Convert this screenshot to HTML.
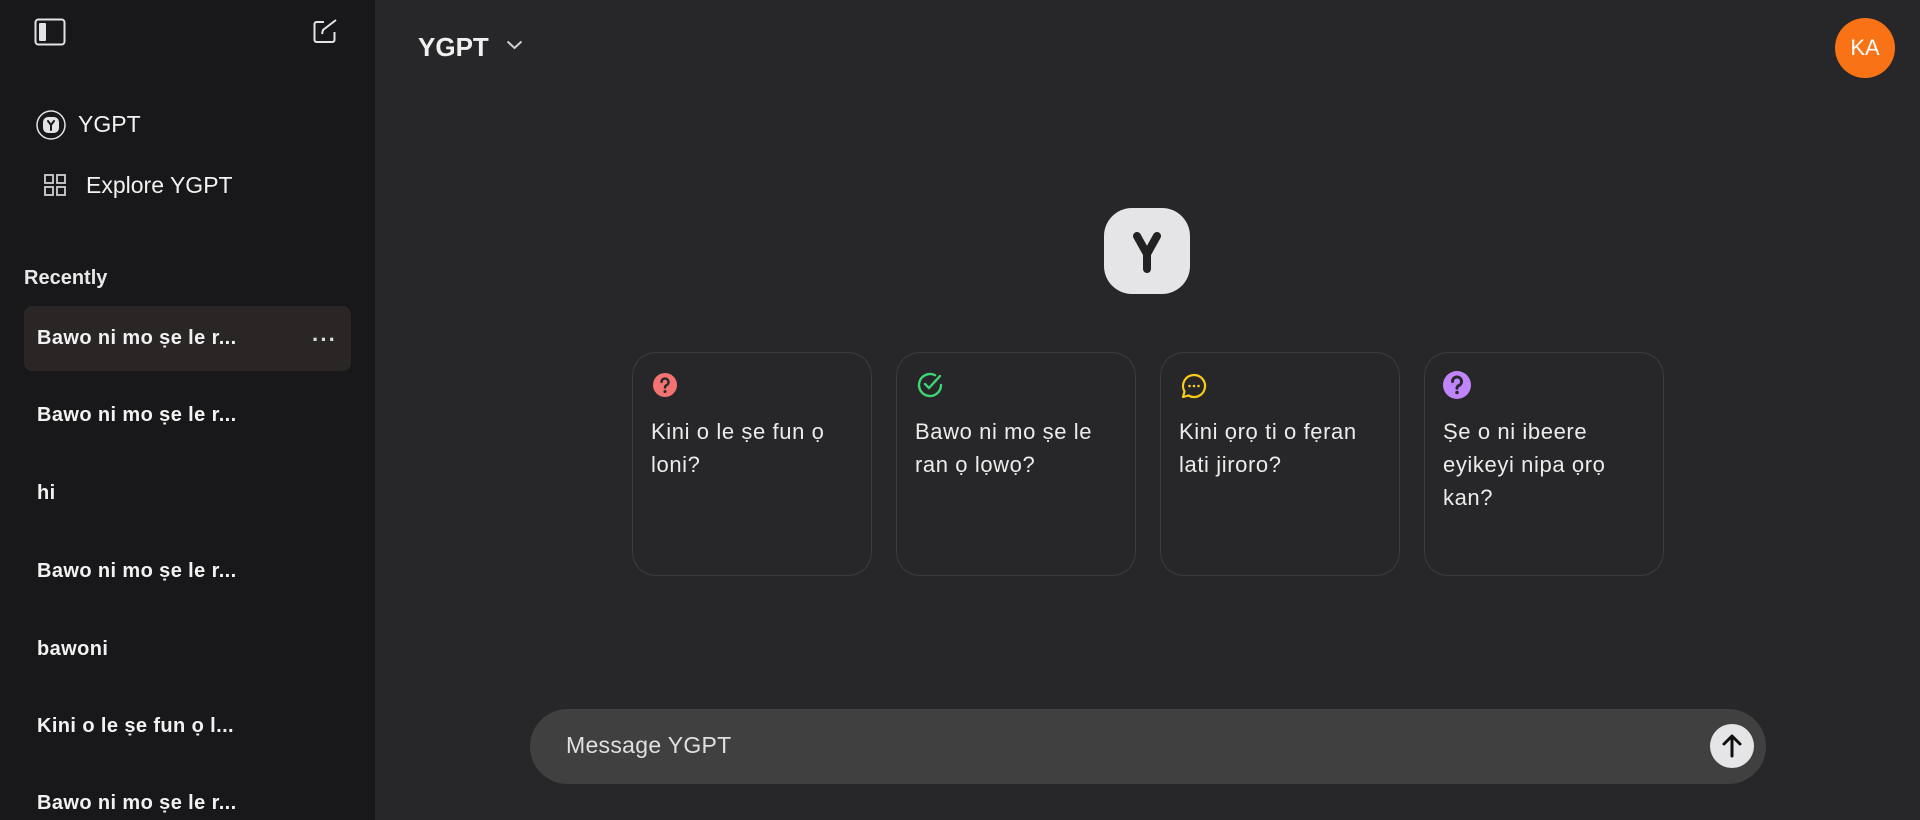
<!DOCTYPE html>
<html><head><meta charset="utf-8">
<style>
*{margin:0;padding:0;box-sizing:border-box}
body{width:1920px;height:820px;overflow:hidden;background:#272729;font-family:"Liberation Sans",Arial,sans-serif;color:#ececec;position:relative}
.sb{position:absolute;left:0;top:0;width:375px;height:820px;background:#18181a}
.abs{position:absolute}
.item{position:absolute;left:37px;font-weight:bold;font-size:20px;letter-spacing:0.4px;color:#f2f2f2;white-space:nowrap}
.card{position:absolute;top:352px;width:240px;height:224px;border:1px solid #3c3c3f;border-radius:24px}
.card svg{position:absolute;left:20px;top:20px}
.card p{position:absolute;left:18px;top:62px;white-space:nowrap;font-size:22px;letter-spacing:0.6px;line-height:33px;color:#ececec}
</style></head><body>
<div class="sb">
  <svg class="abs" style="left:34px;top:18px" width="32" height="28" viewBox="0 0 32 28"><rect x="1.5" y="1.5" width="29" height="25" rx="3" fill="none" stroke="#e3e3e6" stroke-width="2"/><rect x="5" y="5" width="7" height="18" rx="1" fill="#e3e3e6"/></svg>
  <svg class="abs" style="left:312px;top:19px" width="26" height="26" viewBox="0 0 26 26"><path d="M12 3H4.5A2 2 0 0 0 2.5 5v16a2 2 0 0 0 2 2h16a2 2 0 0 0 2-2v-8" fill="none" stroke="#e3e3e6" stroke-width="2"/><path d="M10 15l1-4L24 1" fill="none" stroke="#e3e3e6" stroke-width="2"/></svg>
  <svg class="abs" style="left:36px;top:110px" width="30" height="30" viewBox="0 0 30 30"><circle cx="15" cy="15" r="14" fill="none" stroke="#e3e3e6" stroke-width="1.5"/><rect x="7" y="7" width="16" height="16" rx="5" fill="#e3e3e6"/><path d="M12 11l3 4 3-4M15 15v5" stroke="#18181a" stroke-width="2" fill="none" stroke-linecap="round"/></svg>
  <div class="abs" style="left:78px;top:111px;font-size:23px;color:#f2f2f2">YGPT</div>
  <svg class="abs" style="left:44px;top:174px" width="22" height="22" viewBox="0 0 22 22" fill="none" stroke="#d0d0d3" stroke-width="1.8"><rect x="1" y="1" width="8" height="8"/><rect x="13" y="1" width="8" height="8"/><rect x="1" y="13" width="8" height="8"/><rect x="13" y="13" width="8" height="8"/></svg>
  <div class="abs" style="left:86px;top:172px;font-size:23px;color:#f2f2f2">Explore YGPT</div>
  <div class="abs" style="left:24px;top:267px;font-size:20px;font-weight:bold;color:#e8e8e8">Recently</div>
  <div class="abs" style="left:24px;top:306px;width:327px;height:65px;background:#2a2625;border-radius:8px"></div>
  <div class="item" style="top:327px">Bawo ni mo ṣe le r...</div>
  <div class="abs" style="left:312px;top:327px;font-size:22px;color:#ddd;letter-spacing:1px;font-weight:bold">···</div>
  <div class="item" style="top:404px">Bawo ni mo ṣe le r...</div>
  <div class="item" style="top:482px">hi</div>
  <div class="item" style="top:560px">Bawo ni mo ṣe le r...</div>
  <div class="item" style="top:638px">bawoni</div>
  <div class="item" style="top:715px">Kini o le ṣe fun ọ l...</div>
  <div class="item" style="top:792px">Bawo ni mo ṣe le r...</div>
</div>

<div class="abs" style="left:418px;top:32px;font-size:26px;font-weight:bold;color:#f0f0f0">YGPT</div>
<svg class="abs" style="left:506px;top:40px" width="17" height="10" viewBox="0 0 17 10"><path d="M1.5 1.5l7 6.5 7-6.5" fill="none" stroke="#cfcfd2" stroke-width="2"/></svg>
<div class="abs" style="left:1835px;top:18px;width:60px;height:60px;border-radius:50%;background:#f97316;color:#fff;font-size:22px;text-align:center;line-height:60px">KA</div>

<div class="abs" style="left:1104px;top:208px;width:86px;height:86px;border-radius:28px;background:#e5e5e8"></div>
<svg class="abs" style="left:1104px;top:208px" width="86" height="86" viewBox="0 0 86 86"><path d="M33 28l10 18 10-18M43 46v15" stroke="#222" stroke-width="8" fill="none" stroke-linecap="round" stroke-linejoin="round"/></svg>

<div class="card" style="left:632px">
  <svg width="24" height="24" viewBox="0 0 24 24"><circle cx="12" cy="12" r="12" fill="#f47272"/><path d="M8.5 9a3.5 3.5 0 1 1 5 3.2c-1 .5-1.5 1-1.5 2.3" fill="none" stroke="#272729" stroke-width="2.4" stroke-linecap="round"/><circle cx="12" cy="18.5" r="1.5" fill="#272729"/></svg>
  <p>Kini o le ṣe fun ọ<br>loni?</p>
</div>
<div class="card" style="left:896px">
  <svg width="28" height="28" viewBox="0 0 28 28" style="left:19px;top:18px"><path d="M25 14A11 11 0 1 1 19 4.2" fill="none" stroke="#3dd675" stroke-width="2.4" stroke-linecap="round"/><path d="M9 13l4 4 11-12" fill="none" stroke="#3dd675" stroke-width="2.4" stroke-linecap="round" stroke-linejoin="round"/></svg>
  <p>Bawo ni mo ṣe le<br>ran ọ lọwọ?</p>
</div>
<div class="card" style="left:1160px">
  <svg width="26" height="26" viewBox="0 0 26 26"><path d="M13 2a11 11 0 1 1-5.5 20.5L2 24l1.5-5.5A11 11 0 0 1 13 2z" fill="none" stroke="#facc15" stroke-width="2.2" stroke-linejoin="round"/><circle cx="8.5" cy="13" r="1.3" fill="#facc15"/><circle cx="13" cy="13" r="1.3" fill="#facc15"/><circle cx="17.5" cy="13" r="1.3" fill="#facc15"/></svg>
  <p>Kini ọrọ ti o fẹran<br>lati jiroro?</p>
</div>
<div class="card" style="left:1424px">
  <svg width="28" height="28" viewBox="0 0 28 28" style="left:18px;top:18px"><circle cx="14" cy="14" r="14" fill="#c084fc"/><path d="M9.5 10.5a4.5 4.5 0 1 1 6.3 4.1c-1.2.5-1.8 1.1-1.8 2.6" fill="none" stroke="#272729" stroke-width="3" stroke-linecap="round"/><circle cx="14" cy="21.5" r="1.8" fill="#272729"/></svg>
  <p>Ṣe o ni ibeere<br>eyikeyi nipa ọrọ<br>kan?</p>
</div>

<div class="abs" style="left:530px;top:709px;width:1236px;height:75px;border-radius:38px;background:#404040"></div>
<div class="abs" style="left:566px;top:732px;font-size:23px;letter-spacing:0.3px;color:#e0e0e0">Message YGPT</div>
<div class="abs" style="left:1710px;top:724px;width:44px;height:44px;border-radius:50%;background:#e5e5e8"></div>
<svg class="abs" style="left:1710px;top:724px" width="44" height="44" viewBox="0 0 44 44"><path d="M22 32V13M14 20l8-8 8 8" fill="none" stroke="#111" stroke-width="3" stroke-linecap="round" stroke-linejoin="round"/></svg>
</body></html>
